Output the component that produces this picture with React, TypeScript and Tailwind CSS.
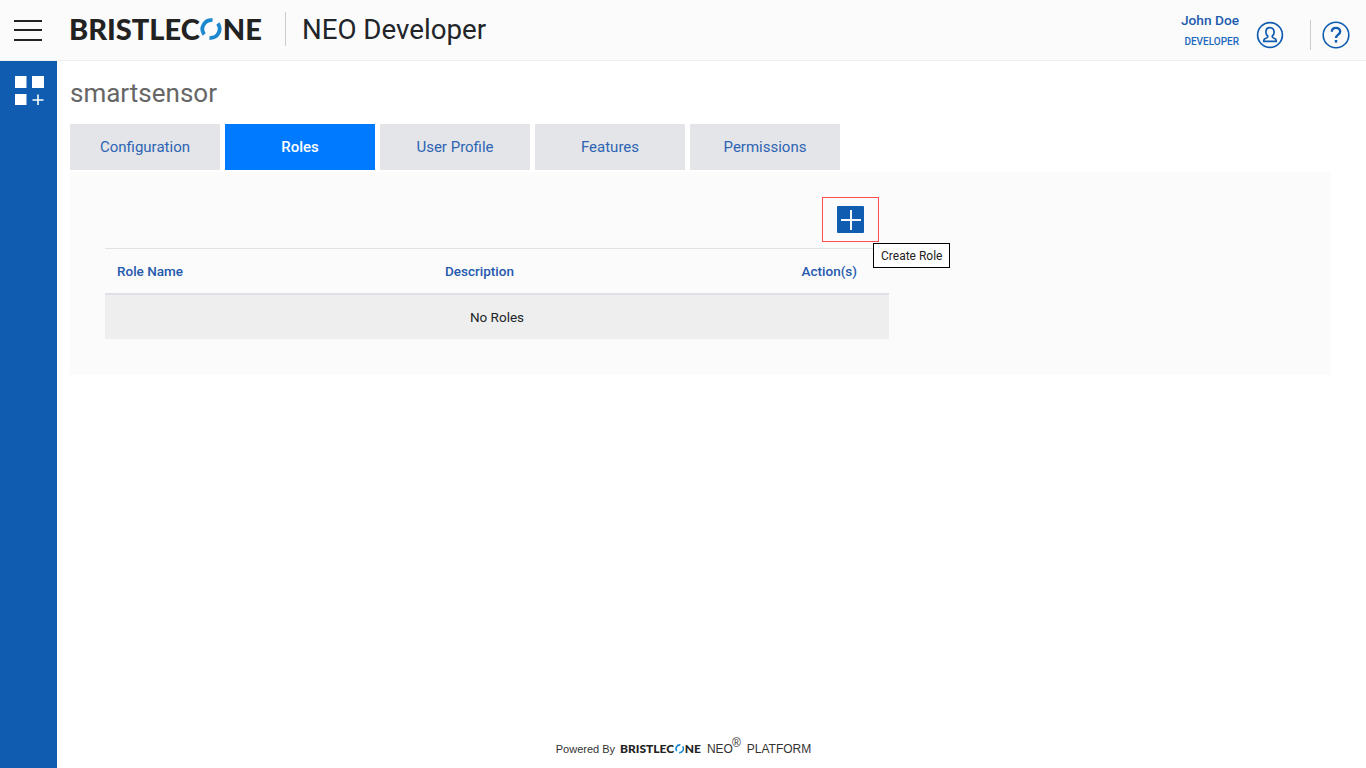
const tabs = ['Configuration', 'Roles', 'User Profile', 'Features', 'Permissions'];

function Logo({ small }: { small?: boolean }) {
  const size = small ? 'text-[12px] h-[13px]' : 'text-[29px] h-[30px]';
  const o = small ? 9.500 : 22;
  return (
    <span className={`flex items-center font-['Lato',sans-serif] font-black leading-none text-[#222] ${size}`}>
      BRISTLEC
      <svg width={o} height={o} viewBox="0 0 22 22" fill="none" className="mx-[0.5px]">
        <path d="M4.2 16.5A9 9 0 0 1 12.5 2.2" stroke="#1b87cf" strokeWidth="3.8" />
        <path d="M17.8 5.5A9 9 0 0 1 9.5 19.8" stroke="#1b87cf" strokeWidth="3.8" />
      </svg>
      NE
    </span>
  );
}

function UserIcon() {
  return (
    <svg width="28" height="28" viewBox="0 0 28 28" fill="none" stroke="#0f5cb0" strokeWidth="1.7">
      <circle cx="14" cy="14" r="12.4" />
      <path d="M14 6.600c-2.600 0-4.100 2-4.100 4.400 0 1.700.7 3.100 1.800 4 .3 1-.2 1.600-1.200 2-1.400.5-2.700 1-2.700 2.300v1h12.400v-1c0-1.300-1.300-1.800-2.700-2.300-1-.4-1.500-1-1.200-2 1.100-.9 1.800-2.300 1.800-4 0-2.400-1.500-4.400-4.100-4.400z" />
    </svg>
  );
}

function HelpIcon() {
  return (
    <svg width="28" height="28" viewBox="0 0 28 28" fill="none" stroke="#0f5cb0">
      <circle cx="14" cy="14" r="12.800" strokeWidth="1.600" />
      <path d="M9.800 10.800c0-2.500 1.800-4 4.200-4s4.200 1.500 4.200 3.700c0 3.200-4.200 3.200-4.200 6.600" strokeWidth="2.300" />
      <path d="M14 19v2.600" strokeWidth="2.500" />
    </svg>
  );
}

function AppsIcon() {
  return (
    <svg width="29" height="29" viewBox="0 0 29 29" fill="#fff">
      <rect x="0" y="0" width="11.500" height="12" />
      <rect x="17" y="0" width="12" height="12" />
      <rect x="0" y="18" width="11.500" height="11" />
      <path d="M22.200 18.500h1.600v4.700h4.700v1.600h-4.700v4.200h-1.600v-4.200h-4.700v-1.600h4.700z" />
    </svg>
  );
}

export default function App() {
  return (
    <div className="flex h-screen flex-col overflow-hidden bg-white font-['Roboto',sans-serif]">
      <header className="flex h-[61px] shrink-0 items-center border-b border-[#eeeeee] bg-[#fbfbfb]">
        <button className="ml-[14px] flex w-[28px] flex-col gap-[7.500px]">
          <span className="h-[2px] bg-[#222]" />
          <span className="h-[2px] bg-[#222]" />
          <span className="h-[2px] bg-[#222]" />
        </button>
        <div className="mb-[3px] ml-[27px]">
          <Logo />
        </div>
        <div className="mb-[2px] ml-[23px] h-[34px] w-px bg-[#cccccc]" />
        <div className="ml-4 text-[27.700px] leading-none text-[#212529]">NEO Developer</div>
        <div className="ml-auto flex flex-col items-end">
          <span className="mb-[1px] text-[13.700px] font-medium leading-5 text-[#1c5cad]">John Doe</span>
          <span className="mt-[3px] text-[10px] font-medium leading-4 text-[#1c6ac0]">DEVELOPER</span>
        </div>
        <div className="ml-[17px] mt-[10px]">
          <UserIcon />
        </div>
        <div className="ml-[26px] mt-[10px] h-[30px] w-px bg-[#cccccc]" />
        <div className="ml-[11px] mr-[16px] mt-[10px]">
          <HelpIcon />
        </div>
      </header>

      <div className="flex min-h-0 flex-1">
        <aside className="w-[57px] shrink-0 bg-[#0f5cb0] pl-[15px] pt-[15px]">
          <AppsIcon />
        </aside>

        <main className="flex min-w-0 flex-1 flex-col pl-[13px] pr-[35px]">
          <h1 className="mt-[16px] h-[32px] text-[26px] leading-[32px] text-[#666666]">smartsensor</h1>

          <div className="mt-[15px] flex gap-[5px]">
            {tabs.map((tab) => (
              <div
                key={tab}
                className={`flex h-[46px] w-[150px] items-center justify-center text-[15px] ${
                  tab === 'Roles' ? 'bg-[#007bff] font-medium text-white' : 'bg-[#e4e5e9] text-[#2d64b3]'
                }`}
              >
                {tab}
              </div>
            ))}
          </div>

          <section className="mt-[2px] h-[203px] bg-[#fbfbfb] pl-[35px] pt-[25px]">
            <div className="w-[784px]">
              <div className="flex justify-end pr-[10px]">
                <div className="relative">
                  <button className="flex h-[45px] w-[57px] items-center justify-center border border-[#ff4d4f]">
                    <span className="flex h-[27px] w-[27px] items-center justify-center rounded-[1px] bg-[#0f5cb0]">
                      <svg width="20" height="20" viewBox="0 0 20 20" fill="#f4f7fb">
                        <path d="M9 0h2v9h9v2h-9v9H9v-9H0V9h9z" />
                      </svg>
                    </span>
                  </button>
                  <div className="absolute left-[51px] top-[46px] whitespace-nowrap border border-black bg-white px-[7px] pb-[2px] pt-[4px] text-[12px] leading-[17px] text-[#222]">
                    Create Role
                  </div>
                </div>
              </div>

              <div className="mt-[6px] flex h-[47px] items-center border-y border-[#dee2e6] border-b-2 text-[13.500px] font-medium text-[#2459ad]">
                <span className="ml-[12px] w-[328px]">Role Name</span>
                <span className="flex-1">Description</span>
                <span className="mr-[32px]">Action(s)</span>
              </div>
              <div className="flex h-[44px] items-center justify-center bg-[#eeeeee] text-[13.500px] text-[#212529]">No Roles</div>
            </div>
          </section>

          <footer className="mb-[10px] mt-auto flex items-center justify-center pr-[34px] font-['Liberation_Sans',sans-serif] text-[#333]">
            <span className="text-[11px]">Powered By</span>
            <span className="ml-[5px]">
              <Logo small />
            </span>
            <span className="ml-[6px] text-[12px]">NEO</span>
            <sup className="-ml-[1px] text-[12px]">®</sup>
            <span className="ml-[6px] text-[12px]">PLATFORM</span>
          </footer>
        </main>
      </div>
    </div>
  );
}
